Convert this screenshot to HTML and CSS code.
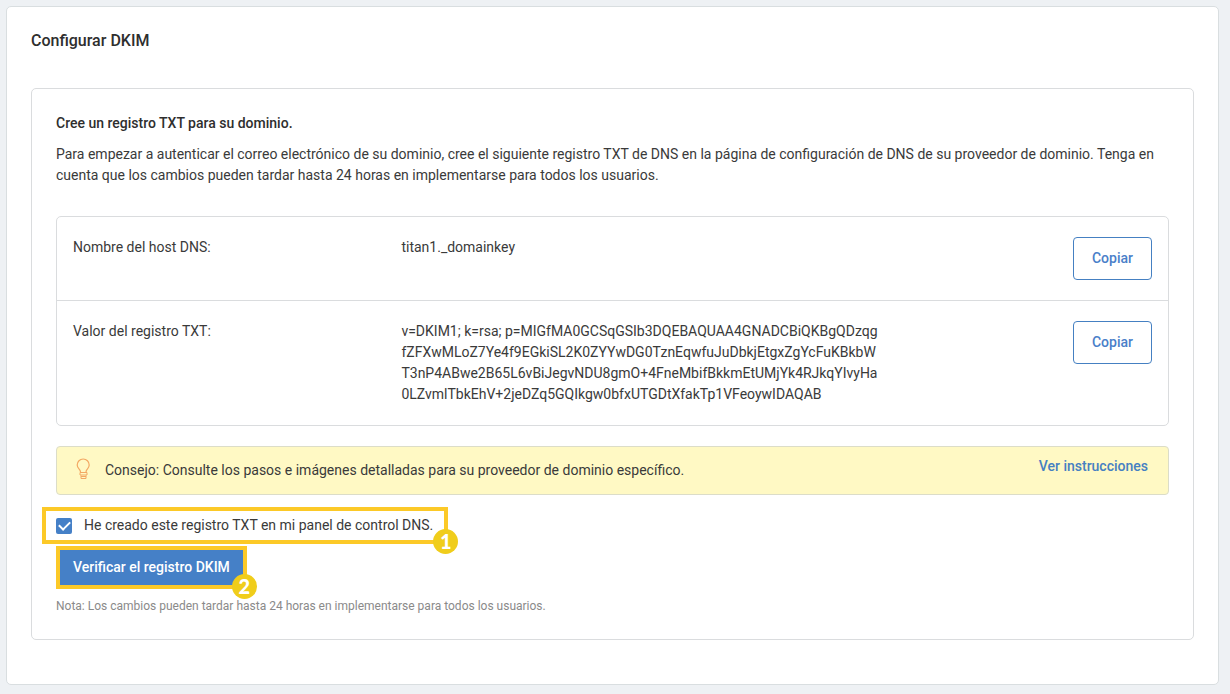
FILE: index.html
```html
<!DOCTYPE html>
<html lang="es">
<head>
<meta charset="utf-8">
<meta name="viewport" content="width=device-width, initial-scale=1">
<title>Configurar DKIM</title>
<link rel="stylesheet" href="styles.css">
</head>
<body>
<main class="card">
  <h1 class="card-title">Configurar DKIM</h1>
  <section class="panel">
    <h2 class="panel-title">Cree un registro TXT para su dominio.</h2>
    <p class="intro">Para empezar a autenticar el correo electrónico de su dominio, cree el siguiente registro TXT de DNS en la página de configuración de DNS de su proveedor de dominio. Tenga en cuenta que los cambios pueden tardar hasta 24 horas en implementarse para todos los usuarios.</p>

    <div class="records">
      <table class="record-table">
        <tr>
          <th class="record-name" scope="row">Nombre del host DNS:</th>
          <td class="record-value">titan1._domainkey</td>
          <td class="record-action"><button class="copy" type="button">Copiar</button></td>
        </tr>
        <tr>
          <th class="record-name" scope="row">Valor del registro TXT:</th>
          <td class="record-value">v=DKIM1; k=rsa; p=MIGfMA0GCSqGSIb3DQEBAQUAA4GNADCBiQKBgQDzqg<wbr>fZFXwMLoZ7Ye4f9EGkiSL2K0ZYYwDG0TznEqwfuJuDbkjEtgxZgYcFuKBkbW<wbr>T3nP4ABwe2B65L6vBiJegvNDU8gmO+4FneMbifBkkmEtUMjYk4RJkqYIvyHa<wbr>0LZvmlTbkEhV+2jeDZq5GQIkgw0bfxUTGDtXfakTp1VFeoywIDAQAB</td>
          <td class="record-action"><button class="copy" type="button">Copiar</button></td>
        </tr>
      </table>
    </div>

    <div class="tip">
      <svg class="bulb" viewBox="0 0 16 22" width="16" height="22" fill="none" stroke="#f3a863" aria-hidden="true">
        <path d="M4.500 14C4.500 11 1.200 10.500 1.200 7a6 6 0 0 1 12 0C13.200 10.500 10 11 10 14" stroke-width="1.200"/>
        <path d="M4 14.500h7v2.500H4zM5 17.500v3h5v-3M5 18.500h5"/>
      </svg>
      <p class="tip-text">Consejo: Consulte los pasos e imágenes detalladas para su proveedor de dominio específico.</p>
      <a class="tip-link" href="#instrucciones">Ver instrucciones</a>
    </div>

    <div class="confirm">
      <label class="check" for="creado"><input class="check-box" id="creado" type="checkbox" checked>He creado este registro TXT en mi panel de control DNS.</label>
      <span class="step">1</span>
    </div>
    <div class="verify">
      <button class="verify-button" type="button">Verificar el registro DKIM</button>
      <span class="step">2</span>
    </div>
    <p class="note">Nota: Los cambios pueden tardar hasta 24 horas en implementarse para todos los usuarios.</p>
  </section>
</main>
</body>
</html>
```
FILE: styles.css
```css
* {
  box-sizing: border-box;
}

body {
  margin: 0;
  padding: 6px 11px 9px 6px;
  min-height: 100vh;
  display: flex;
  background: #eef1f4;
  color: #3a3a3a;
  font: 14px/21px Roboto, "Liberation Sans", sans-serif;
}

h1, h2, p {
  margin: 0;
}

button {
  font: inherit;
  font-weight: 500;
  cursor: pointer;
}

.card {
  flex: 1;
  padding: 24px 24px 44px;
  background: #fff;
  border: 1px solid #d9dee0;
  border-radius: 5px;
}

.card-title {
  margin-bottom: 37px;
  color: #2e2e2e;
  font-size: 16px;
  line-height: 20px;
  font-weight: 500;
}

.panel {
  padding: 24px;
  border: 1px solid #dadcde;
  border-radius: 5px;
}

.panel-title {
  margin-bottom: 10px;
  color: #2e2e2e;
  font-size: 14px;
  line-height: 21px;
  font-weight: 500;
}

.intro {
  margin-bottom: 30px;
}

.records {
  margin-bottom: 20px;
  border: 1px solid #dadcde;
  border-radius: 5px;
}

.record-table {
  width: 100%;
  border-spacing: 0;
}

.record-table th,
.record-table td {
  padding: 20px 16px;
  text-align: left;
  vertical-align: top;
  font-weight: 400;
}

.record-table tr + tr th,
.record-table tr + tr td {
  border-top: 1px solid #dadcde;
}

.record-table .record-name {
  width: 31%;
  padding-right: 0;
}

.record-table .record-value {
  padding-left: 0;
}

.record-table .record-action {
  text-align: right;
}

.copy {
  display: inline-block;
  height: 43px;
  padding: 0 18px;
  vertical-align: top;
  color: #4a7fc9;
  background: #fff;
  border: 1px solid #4580c2;
  border-radius: 4px;
}

.tip {
  display: flex;
  align-items: flex-start;
  margin-bottom: 12px;
  padding: 9px 20px 12px 19px;
  background: #fff9c4;
  border: 1px solid #dcddc8;
  border-radius: 4px;
}

.bulb {
  margin-top: 2px;
}

.tip-text {
  flex: 1;
  padding: 4px 13px 1px;
}

.tip-link {
  color: #4580c2;
  font-weight: 500;
  text-decoration: none;
}

.confirm,
.verify {
  position: relative;
  width: fit-content;
  border: 4px solid #fcc927;
}

.confirm {
  margin: 0 0 2px -14px;
  padding: 4px 11px 4px 10px;
}

.check {
  display: flex;
  align-items: center;
}

.check-box {
  appearance: none;
  width: 16px;
  height: 16px;
  margin: 0 12px 0 0;
  background: #4580c7;
  border-radius: 2px;
  display: grid;
  place-items: center;
}

.check-box:checked::before {
  content: "";
  width: 9px;
  height: 5px;
  margin-bottom: 3px;
  border: solid #fff;
  border-width: 0 0 2px 2px;
  rotate: -45deg;
}

.step {
  position: absolute;
  right: -14px;
  bottom: -14px;
  width: 25px;
  height: 25px;
  border-radius: 50%;
  background: #f0cd1b;
  color: #fff;
  font: 900 20px/24px Lato, sans-serif;
  text-align: center;
}

.verify-button {
  display: block;
  height: 35px;
  padding: 0 13px;
  color: #fff;
  background: #4580c7;
  border: 0;
}

.note {
  margin-top: 8px;
  color: #8a8a8a;
  font-size: 12px;
  line-height: 18px;
}
```
